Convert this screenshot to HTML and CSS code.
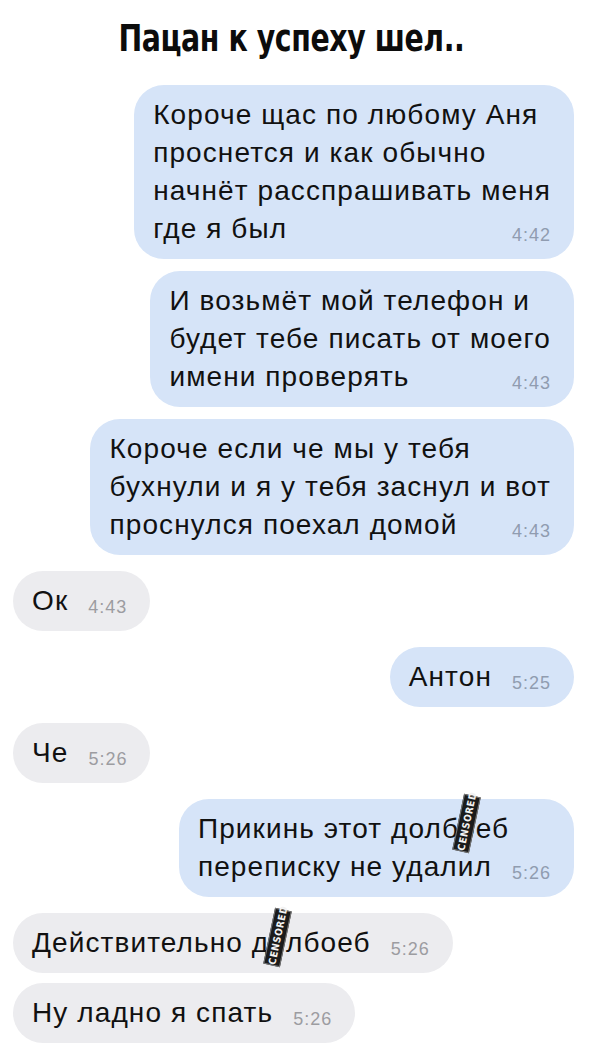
FILE: index.html
```html
<!DOCTYPE html>
<html lang="ru">
<head>
  <meta charset="UTF-8" />
  <meta name="viewport" content="width=device-width, initial-scale=1.0"/>
  <title>Пацан к успеху шел..</title>
  <link rel="stylesheet" href="styles.css">
</head>
<body>

<h1 class="title"><span>Пацан к успеху шел..</span></h1>

<!-- Chat -->
<div class="chat">
  <div class="msg out">
    <p class="text">Короче щас по любому Аня<br>проснется и как обычно<br>начнёт расспрашивать меня<br>где я был<span class="time">4:42</span></p>
  </div>
  <div class="msg out same">
    <p class="text">И возьмёт мой телефон и<br>будет тебе писать от моего<br>имени проверять<span class="time">4:43</span></p>
  </div>
  <div class="msg out same">
    <p class="text">Короче если че мы у тебя<br>бухнули и я у тебя заснул и вот<br>проснулся поехал домой<span class="time">4:43</span></p>
  </div>

  <div class="msg in">
    <p class="text">Ок<span class="time">4:43</span></p>
  </div>

  <div class="msg out">
    <p class="text">Антон<span class="time">5:25</span></p>
  </div>

  <div class="msg in">
    <p class="text">Че<span class="time">5:26</span></p>
  </div>

  <div class="msg out">
    <p class="text">Прикинь этот долб<span class="hidden">о<span class="stamp">CENSORED</span></span>еб<br>переписку не удалил<span class="time">5:26</span></p>
  </div>

  <div class="msg in">
    <p class="text">Действительно д<span class="hidden">о<span class="stamp">CENSORED</span></span>лбоеб<span class="time">5:26</span></p>
  </div>
  <div class="msg in last">
    <p class="text">Ну ладно я спать<span class="time">5:26</span></p>
  </div>
</div>

</body>
</html>
```

FILE: styles.css
```css
* {
  margin: 0;
  padding: 0;
  box-sizing: border-box;
}

body {
  font-family: 'Liberation Sans', Arial, sans-serif;
  background: #ffffff;
  color: #111;
  width: 600px;
}

.title {
  font-family: 'DejaVu Sans Condensed', 'DejaVu Sans', sans-serif;
  font-stretch: condensed;
  font-weight: bold;
  font-size: 38px;
  line-height: 44px;
  letter-spacing: -0.5px;
  text-align: center;
  padding: 16px 18px 0 0;
  height: 85px;
  color: #0c0c0c;
}

.title span {
  display: inline-block;
  transform: scaleX(0.83);
}

.chat {
  display: flex;
  flex-direction: column;
  padding: 0 26px 0 13px;
}

.msg {
  margin-top: 16px;
  border-radius: 30px;
  padding: 11px 23px 11px 19px;
}

.msg:first-child {
  margin-top: 0;
}

.msg.same {
  margin-top: 12px;
}

.msg.last {
  margin-top: 10px;
}

.out {
  align-self: flex-end;
  background: #d6e4f8;
}

.in {
  align-self: flex-start;
  background: #ececef;
}

.text {
  font-size: 28px;
  line-height: 38px;
  letter-spacing: 1.1px;
  white-space: nowrap;
}

.time {
  float: right;
  font-size: 18px;
  line-height: 20px;
  letter-spacing: 1px;
  margin: 15px 0 0 20px;
  color: #909cb0;
}

.in .time {
  color: #9c9ca1;
}

.hidden {
  position: relative;
}

.stamp {
  position: absolute;
  left: 50%;
  top: 50%;
  width: 17px;
  height: 57px;
  margin: -34px 0 0 -9px;
  background: #1b1b1b;
  border: 1px solid #777;
  color: #f2f2f2;
  font-family: 'DejaVu Sans Condensed', 'DejaVu Sans', sans-serif;
  font-stretch: condensed;
  font-weight: bold;
  font-size: 10px;
  line-height: 15px;
  letter-spacing: 0.6px;
  text-align: center;
  writing-mode: vertical-rl;
  transform: rotate(192deg);
}
```
